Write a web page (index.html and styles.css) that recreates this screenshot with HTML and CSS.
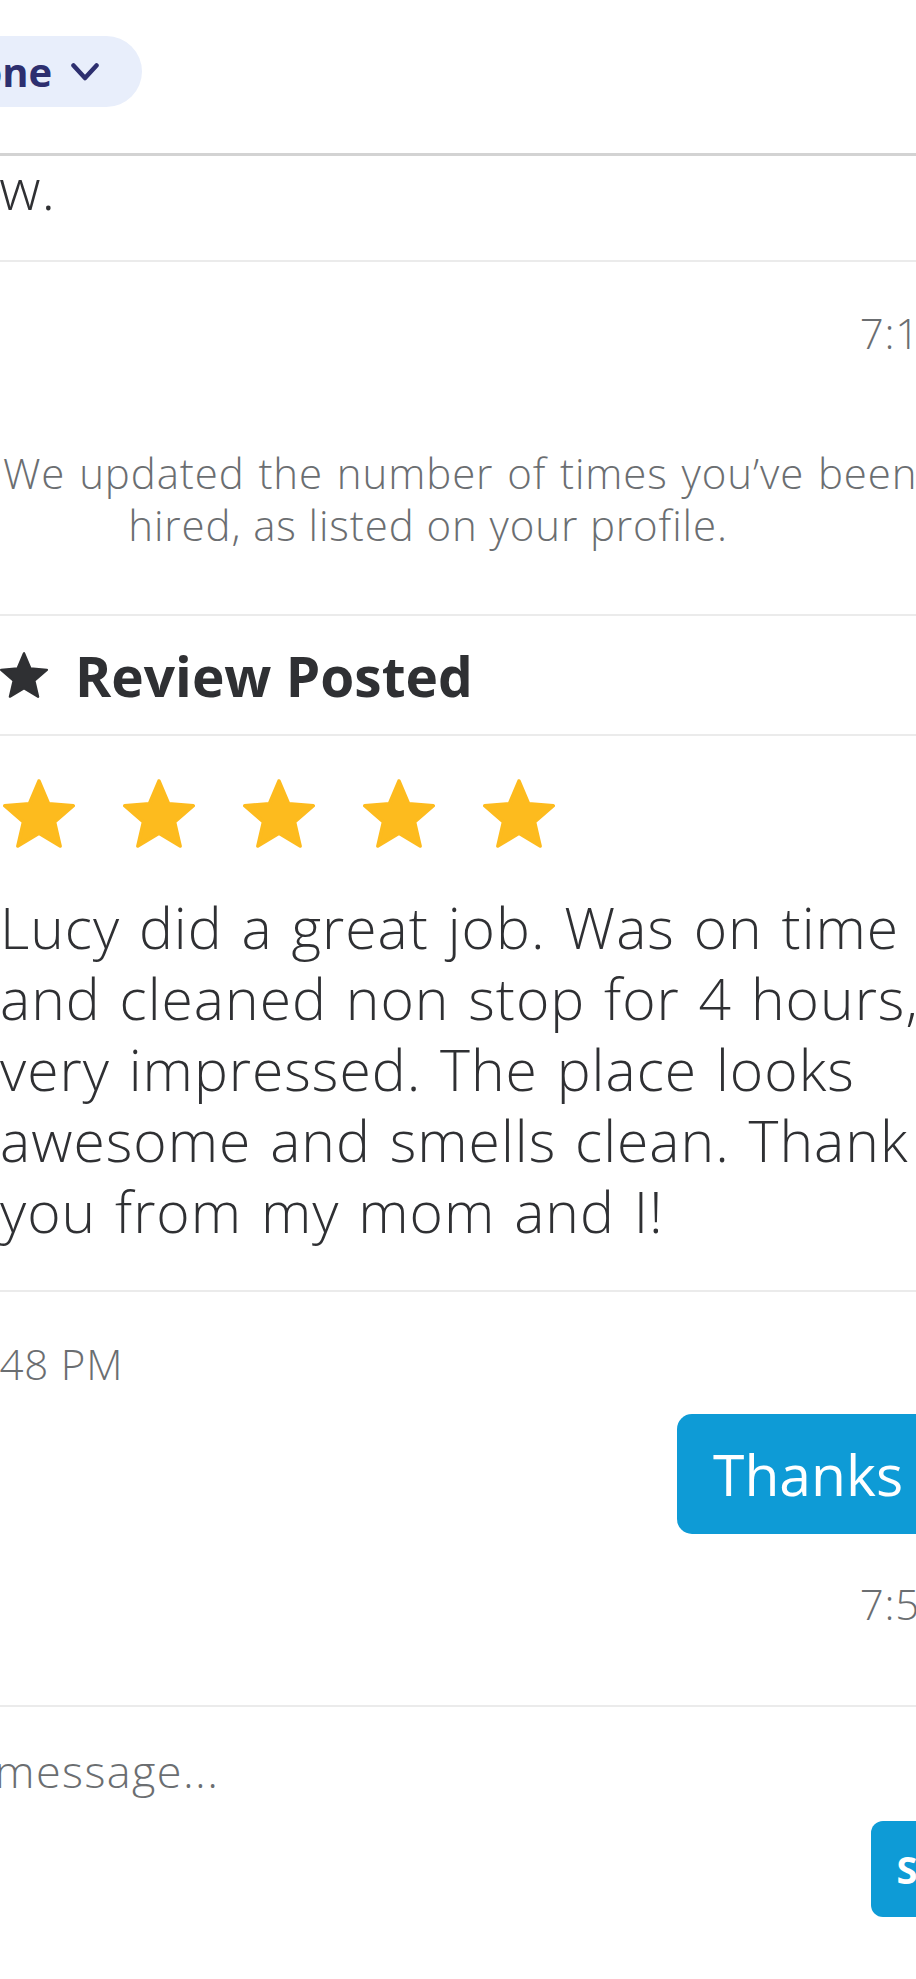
FILE: index.html
```html
<!DOCTYPE html>
<html>
  <head>
    <meta charset="utf-8" />
    <title>Messages</title>
    <meta name="viewport" content="width=device-width, initial-scale=1.0" />
    <link rel="stylesheet" href="styles.css">
  </head>
  <body>
    <div id="screen">
      <div id="topbar">
        <span class="pill">
          <span class="pill-label">Phone</span>
          <svg class="chevron" viewBox="0 0 28 18" width="28" height="18">
            <polyline points="2.5,2.5 14,15 25.5,2.5" />
          </svg>
        </span>
      </div>

      <div id="thread">
        <div class="row msg-tail">
          <div class="tail-clip">Please leave a review.</div>
        </div>

        <div class="row notice-row">
          <div class="time time-right">7:13 PM</div>
          <p class="notice"><span class="notice-first">We updated the number of times you’ve been</span><br>hired, as listed on your profile.</p>
        </div>

        <div class="row review-head">
          <svg class="head-star" viewBox="1.5 1.5 21 20" width="48" height="46">
            <path d="M12 17.27L18.18 21l-1.64-7.03L22 9.24l-7.19-.61L12 2 9.19 8.63 2 9.24l5.46 4.73L5.82 21z" />
          </svg>
          <span>Review Posted</span>
        </div>

        <div class="row review">
          <div class="stars">
            <svg class="star" viewBox="1.5 1.5 21 20" width="72" height="69"><path d="M12 17.27L18.18 21l-1.64-7.03L22 9.24l-7.19-.61L12 2 9.19 8.63 2 9.24l5.46 4.73L5.82 21z" /></svg>
            <svg class="star" viewBox="1.5 1.5 21 20" width="72" height="69"><path d="M12 17.27L18.18 21l-1.64-7.03L22 9.24l-7.19-.61L12 2 9.19 8.63 2 9.24l5.46 4.73L5.82 21z" /></svg>
            <svg class="star" viewBox="1.5 1.5 21 20" width="72" height="69"><path d="M12 17.27L18.18 21l-1.64-7.03L22 9.24l-7.19-.61L12 2 9.19 8.63 2 9.24l5.46 4.73L5.82 21z" /></svg>
            <svg class="star" viewBox="1.5 1.5 21 20" width="72" height="69"><path d="M12 17.27L18.18 21l-1.64-7.03L22 9.24l-7.19-.61L12 2 9.19 8.63 2 9.24l5.46 4.73L5.82 21z" /></svg>
            <svg class="star" viewBox="1.5 1.5 21 20" width="72" height="69"><path d="M12 17.27L18.18 21l-1.64-7.03L22 9.24l-7.19-.61L12 2 9.19 8.63 2 9.24l5.46 4.73L5.82 21z" /></svg>
          </div>
          <p class="review-text">Lucy did a great job. Was on time<br>and cleaned non stop for 4 hours,<br>very impressed. The place looks<br>awesome and smells clean. Thank<br>you from my mom and I!</p>
        </div>

        <div class="row chat">
          <div class="time time-left">7:48 PM</div>
          <div class="outgoing">
            <div class="bubble">Thanks Lucy!</div>
          </div>
          <div class="time time-right">7:59 PM</div>
        </div>

        <div class="composer">
          <div class="placeholder">Type a message...</div>
          <div class="composer-actions">
            <button class="send">Send</button>
          </div>
        </div>
      </div>
    </div>
  </body>
</html>
```

FILE: styles.css
```css
body {
  margin: 0;
  font-family: 'Open Sans', sans-serif;
  color: #2F3033;
  background-color: #FFFFFF;
}

#screen {
  width: 916px;
  height: 1979px;
  overflow: hidden;
}

#topbar {
  height: 117px;
  padding-top: 36px;
  border-bottom: 3px solid #D3D3D3;
}

.pill {
  display: inline-flex;
  align-items: center;
  height: 71px;
  padding: 0 43px 0 30px;
  margin-left: -104px;
  border-radius: 36px;
  background-color: #E8EEFB;
  color: #2D2F6F;
  font-size: 40px;
  font-weight: 700;
}

.chevron {
  margin-left: 19px;
  fill: none;
  stroke: #2D2F6F;
  stroke-width: 4.5;
  stroke-linecap: round;
  stroke-linejoin: round;
}

#thread {
  width: 1015px;
  font-weight: 300;
}

.row {
  border-bottom: 2px solid #EBEBEB;
}

.msg-tail {
  height: 104px;
  font-size: 57px;
  line-height: 64px;
  letter-spacing: 1px;
}

.tail-clip {
  display: flex;
  justify-content: flex-end;
  width: 56px;
  white-space: nowrap;
}

.notice-row {
  padding: 42px 0 63px;
}

.time {
  font-size: 42px;
  line-height: 58px;
  letter-spacing: 0.8px;
  color: #6B6E71;
}

.time-right {
  text-align: right;
  margin-right: -4px;
}

.time-left {
  margin-left: -36px;
}

.notice {
  margin: 85px 0 0;
  width: 850px;
  padding-left: 3px;
  text-align: center;
  font-size: 42px;
  line-height: 52px;
  letter-spacing: 0.9px;
  color: #6B6E71;
}

.notice-first {
  white-space: nowrap;
  word-spacing: 2px;
}

.review-head {
  display: flex;
  align-items: center;
  gap: 27px;
  height: 118px;
  font-size: 55px;
  font-weight: 700;
}

.head-star path {
  fill: #2F3033;
  stroke: #2F3033;
  stroke-width: 1;
  stroke-linejoin: round;
}

.review {
  padding: 43px 0;
}

.stars {
  display: flex;
  gap: 48px;
  padding-left: 3px;
  height: 69px;
}

.star path {
  fill: #FDBB1E;
  stroke: #FDBB1E;
  stroke-width: 1;
  stroke-linejoin: round;
}

.review-text {
  margin: 44px 0 0;
  font-size: 57px;
  line-height: 71px;
  letter-spacing: 1px;
  word-spacing: 3px;
  white-space: nowrap;
}

.chat {
  padding: 43px 0 72px;
}

.outgoing {
  display: flex;
  justify-content: flex-end;
  margin: 21px 0 41px;
}

.bubble {
  display: flex;
  align-items: center;
  box-sizing: border-box;
  max-width: 338px;
  height: 120px;
  padding: 0 36px;
  overflow: hidden;
  white-space: nowrap;
  border-radius: 15px;
  background-color: #0E9BD6;
  color: #FFFFFF;
  font-size: 57px;
  font-weight: 400;
}

.composer {
  padding-top: 35px;
}

.placeholder {
  margin-left: -158px;
  font-size: 45px;
  line-height: 58px;
  letter-spacing: 1.4px;
  color: #6B6E71;
  white-space: nowrap;
}

.composer-actions {
  display: flex;
  justify-content: flex-end;
  margin-top: 21px;
}

.send {
  height: 96px;
  padding: 0 26px;
  border: 0;
  border-radius: 12px;
  background-color: #0E9BD6;
  color: #FFFFFF;
  font-family: 'Open Sans', sans-serif;
  font-size: 38px;
  font-weight: 700;
}
```
